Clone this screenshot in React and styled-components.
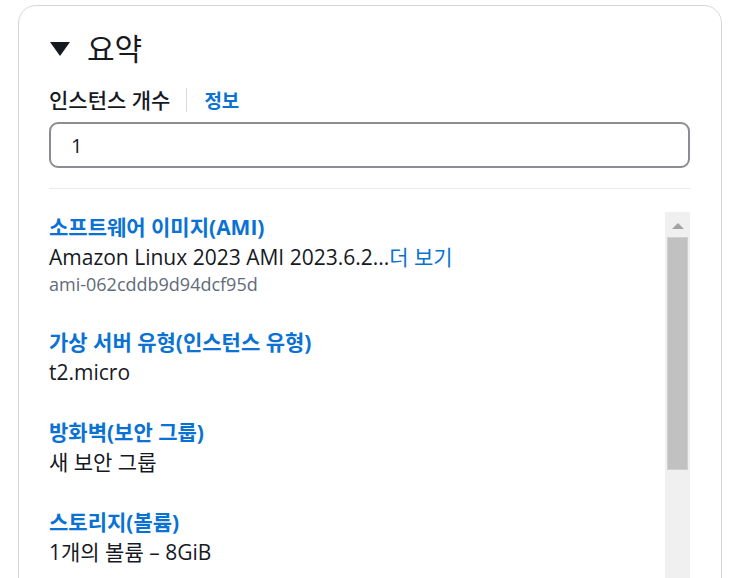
import React from "react";
import styled, { createGlobalStyle } from "styled-components";

const GlobalStyle = createGlobalStyle`
  html, body {
    margin: 0;
    padding: 0;
    background: #ffffff;
    overflow: hidden;
  }
  body {
    font-family: "Open Sans", "Noto Sans CJK KR", sans-serif;
    color: #16191f;
  }
`;

const Page = styled.div`
  width: 735px;
  height: 578px;
  overflow: hidden;
  padding: 5px 0 0 18px;
  box-sizing: border-box;
`;

const Card = styled.section`
  width: 704px;
  height: 640px;
  box-sizing: border-box;
  border: 1px solid #d5d6dc;
  border-radius: 18px;
  padding: 25px 31px 0 30px;
  background: #ffffff;
`;

const Heading = styled.h2`
  display: flex;
  align-items: center;
  gap: 17px;
  margin: 0;
  height: 36px;
  font-size: 30px;
  font-weight: 400;
  line-height: 36px;
  color: #16191f;
`;

const Caret = styled.span`
  width: 0;
  height: 0;
  margin-left: 1px;
  border-left: 10px solid transparent;
  border-right: 10px solid transparent;
  border-top: 14px solid #16191f;
`;

const LabelRow = styled.div`
  display: flex;
  align-items: center;
  margin-top: 20px;
  height: 26px;
`;

const Label = styled.label`
  font-size: 21px;
  font-weight: 500;
  line-height: 26px;
  color: #16191f;
`;

const Divider = styled.span`
  width: 1px;
  height: 24px;
  margin: 0 17px 0 16px;
  background: #d5dbdb;
`;

const InfoLink = styled.a`
  font-size: 19px;
  font-weight: 700;
  color: #0972d3;
  text-decoration: none;
`;

const Input = styled.input`
  display: block;
  width: 100%;
  height: 46px;
  margin-top: 9px;
  box-sizing: border-box;
  border: 2px solid #8c8c94;
  border-radius: 9px;
  padding: 0 20px;
  font-family: "Open Sans", "Noto Sans CJK KR", sans-serif;
  font-size: 20px;
  color: #16191f;
  background: #ffffff;
  outline: none;
`;

const Rule = styled.hr`
  margin: 20px 0 0;
  border: none;
  border-top: 1px solid #e9ebed;
`;

const ScrollArea = styled.div`
  display: flex;
  margin-top: 23px;
`;

const List = styled.div`
  flex: 1;
  display: flex;
  flex-direction: column;
  gap: 30px;
`;

const Item = styled.div`
  display: flex;
  flex-direction: column;
`;

const Title = styled.a`
  font-size: 21px;
  font-weight: 700;
  line-height: 30px;
  color: #0972d3;
  text-decoration: none;
`;

const Value = styled.div`
  font-size: 21px;
  line-height: 30px;
  color: #16191f;
`;

const More = styled.a`
  color: #0972d3;
  text-decoration: none;
`;

const SubId = styled.div`
  font-size: 18px;
  line-height: 25px;
  color: #5f6b7a;
`;

const Scrollbar = styled.div`
  width: 25px;
  height: 380px;
  background: #f0f0f0;
  display: flex;
  flex-direction: column;
  align-items: center;
`;

const Arrow = styled.span`
  width: 0;
  height: 0;
  margin-top: 11px;
  border-left: 6px solid transparent;
  border-right: 6px solid transparent;
  border-bottom: 6px solid #a3a3a3;
`;

const Thumb = styled.div`
  width: 21px;
  height: 233px;
  margin-top: 8px;
  box-sizing: border-box;
  background: #c1c1c1;
  border: 1px solid #d0d0d0;
`;

const summary = [
  {
    title: "소프트웨어 이미지(AMI)",
    value: "Amazon Linux 2023 AMI 2023.6.2...",
    more: "더 보기",
    sub: "ami-062cddb9d94dcf95d",
  },
  { title: "가상 서버 유형(인스턴스 유형)", value: "t2.micro" },
  { title: "방화벽(보안 그룹)", value: "새 보안 그룹" },
  { title: "스토리지(볼륨)", value: "1개의 볼륨 – 8GiB" },
];

export default function App() {
  return (
    <>
      <GlobalStyle />
      <Page>
        <Card>
          <Heading>
            <Caret />
            요약
          </Heading>
          <LabelRow>
            <Label>인스턴스 개수</Label>
            <Divider />
            <InfoLink href="#">정보</InfoLink>
          </LabelRow>
          <Input type="text" defaultValue="1" />
          <Rule />
          <ScrollArea>
            <List>
              {summary.map((item) => (
                <Item key={item.title}>
                  <Title href="#">{item.title}</Title>
                  <Value>
                    {item.value}
                    {item.more && <More href="#">{item.more}</More>}
                  </Value>
                  {item.sub && <SubId>{item.sub}</SubId>}
                </Item>
              ))}
            </List>
            <Scrollbar>
              <Arrow />
              <Thumb />
            </Scrollbar>
          </ScrollArea>
        </Card>
      </Page>
    </>
  );
}
